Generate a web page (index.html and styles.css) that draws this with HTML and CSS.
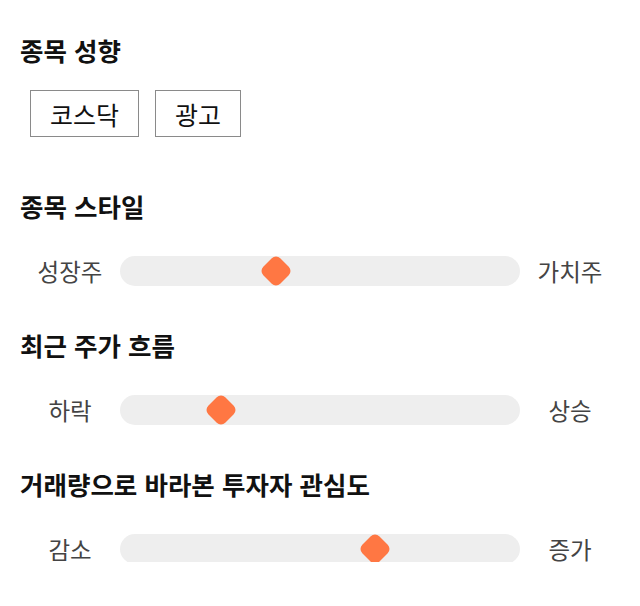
FILE: index.html
```html
<!DOCTYPE html>
<html lang="ko">
<head>
<meta charset="utf-8">
<link rel="stylesheet" href="styles.css">
</head>
<body>
<div class="page">
  <section class="group">
    <h2 class="title">종목 성향</h2>
    <div class="tags">
      <span class="tag">코스닥</span>
      <span class="tag">광고</span>
    </div>
  </section>
  <section class="group">
    <h2 class="title">종목 스타일</h2>
    <div class="slider">
      <span class="label">성장주</span>
      <div class="track"><span class="thumb" style="left:39%"></span></div>
      <span class="label">가치주</span>
    </div>
  </section>
  <section class="group">
    <h2 class="title">최근 주가 흐름</h2>
    <div class="slider">
      <span class="label">하락</span>
      <div class="track"><span class="thumb" style="left:25.25%"></span></div>
      <span class="label">상승</span>
    </div>
  </section>
  <section class="group">
    <h2 class="title">거래량으로 바라본 투자자 관심도</h2>
    <div class="slider">
      <span class="label">감소</span>
      <div class="track"><span class="thumb" style="left:63.75%"></span></div>
      <span class="label">증가</span>
    </div>
  </section>
</div>
</body>
</html>
```
FILE: styles.css
```css
html, body {
  margin: 0;
  padding: 0;
  background: #ffffff;
}
body {
  font-family: "Noto Sans CJK KR", "Noto Sans", sans-serif;
  color: #111;
}
.page {
  padding: 34px 20px 0 20px;
}
.group + .group {
  margin-top: 53px;
}
.group:nth-child(n+3) {
  margin-top: 45px;
}
.title {
  margin: 0;
  font-size: 25.5px;
  line-height: 32px;
  font-weight: 700;
  color: #111;
}
.tags {
  display: flex;
  gap: 16px;
  margin: 24px 0 0 10px;
}
.tag {
  display: flex;
  align-items: center;
  justify-content: center;
  box-sizing: border-box;
  height: 47px;
  padding: 0 19px;
  border: 1px solid #8a8a8a;
  font-size: 25px;
  color: #111;
}
.slider {
  display: grid;
  grid-template-columns: 100px 400px 100px;
  align-items: center;
  margin-top: 32px;
  height: 30px;
}
.label {
  text-align: center;
  font-size: 23.5px;
  color: #444;
}
.track {
  position: relative;
  height: 30px;
  border-radius: 15px;
  background: #eeeeee;
}
.thumb {
  position: absolute;
  top: 50%;
  width: 24px;
  height: 24px;
  border-radius: 6px;
  background: #ff7743;
  transform: translate(-50%, -50%) rotate(45deg);
}
```
